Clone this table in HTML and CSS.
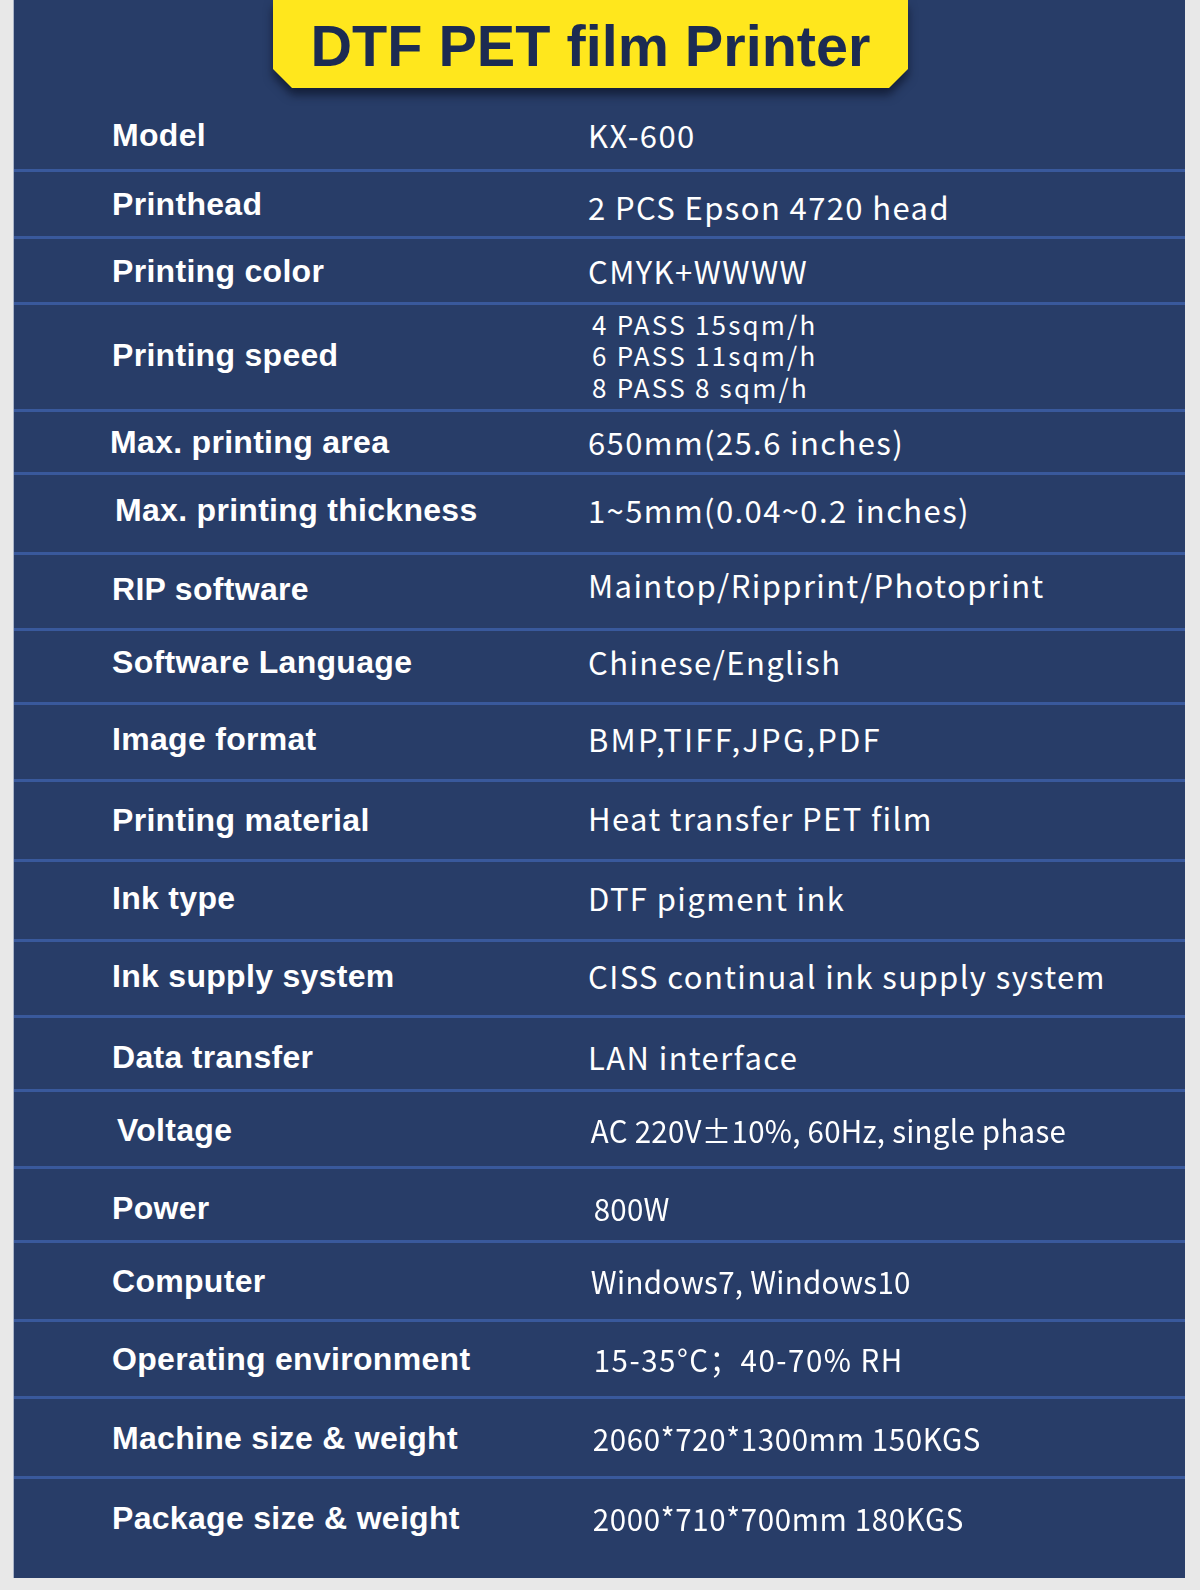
FILE: index.html
```html
<!DOCTYPE html>
<html lang="en">
<head>
<meta charset="utf-8">
<title>DTF PET film Printer</title>
<link rel="stylesheet" href="styles.css">
</head>
<body>
<main class="sheet">
  <header class="banner-wrap">
    <div class="banner"><h1 class="title">DTF PET film Printer</h1></div>
  </header>
  <section class="specs">
    <div class="row"><div class="label">Model</div><div class="value">KX-600</div></div>
    <div class="row"><div class="label">Printhead</div><div class="value value-down">2 PCS Epson 4720 head</div></div>
    <div class="row"><div class="label">Printing color</div><div class="value">CMYK+WWWW</div></div>
    <div class="row"><div class="label">Printing speed</div><div class="value value-list"><span>4 PASS 15sqm/h</span><span>6 PASS 11sqm/h</span><span>8 PASS 8 sqm/h</span></div></div>
    <div class="row"><div class="label label-left">Max. printing area</div><div class="value">650mm(25.6 inches)</div></div>
    <div class="row"><div class="label label-right">Max. printing thickness</div><div class="value">1~5mm(0.04~0.2 inches)</div></div>
    <div class="row"><div class="label">RIP software</div><div class="value value-up">Maintop/Ripprint/Photoprint</div></div>
    <div class="row"><div class="label">Software Language</div><div class="value">Chinese/English</div></div>
    <div class="row"><div class="label">Image format</div><div class="value value-wide">BMP,TIFF,JPG,PDF</div></div>
    <div class="row"><div class="label">Printing material</div><div class="value value-up-s">Heat transfer PET film</div></div>
    <div class="row"><div class="label">Ink type</div><div class="value">DTF pigment ink</div></div>
    <div class="row"><div class="label">Ink supply system</div><div class="value">CISS continual ink supply system</div></div>
    <div class="row"><div class="label">Data transfer</div><div class="value">LAN interface</div></div>
    <div class="row"><div class="label label-right2">Voltage</div><div class="value"><span class="cond">AC 220V±10%, 60Hz, single phase</span></div></div>
    <div class="row"><div class="label">Power</div><div class="value"><span class="cond cond-in">800W</span></div></div>
    <div class="row"><div class="label">Computer</div><div class="value"><span class="cond">Windows7, Windows10</span></div></div>
    <div class="row"><div class="label">Operating environment</div><div class="value"><span class="cond cond-in cond-wide">15-35°C；40-70% RH</span></div></div>
    <div class="row"><div class="label">Machine size &amp; weight</div><div class="value"><span class="cond cond-mid">2060*720*1300mm 150KGS</span></div></div>
    <div class="row"><div class="label">Package size &amp; weight</div><div class="value"><span class="cond cond-mid">2000*710*700mm 180KGS</span></div></div>
  </section>
</main>
</body>
</html>
```
FILE: styles.css
```css
* { box-sizing: border-box; }
html, body { margin: 0; padding: 0; }
body {
  background: #e8e8e8;
  width: 1200px;
  height: 1590px;
  overflow: hidden;
}
.sheet {
  margin-left: 13px;
  width: 1172px;
  height: 1578px;
  background: #283d68;
  border-left: 1px solid #aab4c8;
  display: flex;
  flex-direction: column;
}
.banner-wrap {
  height: 88px;
  padding-left: 259px;
  filter: drop-shadow(0 7px 5px rgba(8, 14, 32, 0.65));
}
.banner {
  width: 635px;
  height: 88px;
  background: #ffe71d;
  clip-path: polygon(0 0, 100% 0, 100% 69px, calc(100% - 19px) 100%, 19px 100%, 0 69px);
  display: flex;
  justify-content: center;
  align-items: flex-start;
}
.title {
  margin: 0;
  padding-top: 13px;
  font-family: "Liberation Sans", Arial, sans-serif;
  font-weight: 700;
  font-size: 57.6px;
  line-height: 66px;
  color: #1c2b52;
  letter-spacing: 0;
}
.specs {
  display: flex;
  flex-direction: column;
}
.row {
  display: grid;
  grid-template-columns: 476px 1fr;
  align-items: center;
  padding-left: 98px;
  border-bottom: 3px solid #39599c;
  color: #ffffff;
}
.row:last-child { border-bottom: 0; }
.label {
  font-family: "Liberation Sans", Arial, sans-serif;
  font-weight: 700;
  font-size: 32px;
  letter-spacing: 0.3px;
  line-height: 38px;
  white-space: nowrap;
}
.label-left { margin-left: -2px; }
.label-right { margin-left: 3px; }
.label-right2 { margin-left: 5px; }
.value {
  font-family: "Noto Sans CJK SC", "Noto Sans", sans-serif;
  font-size: 31px;
  letter-spacing: 1.4px;
  line-height: 40px;
  white-space: nowrap;
}
.value-down { margin-top: 5px; }
.value-up { margin-bottom: 8px; }
.value-up-s { margin-bottom: 4px; }
.value-wide { letter-spacing: 2.2px; }
.value-list {
  display: flex;
  flex-direction: column;
  font-size: 26px;
  letter-spacing: 2.2px;
  line-height: 31.5px;
  padding-left: 4px;
}
.cond {
  display: inline-block;
  padding-left: 3px;
  font-size: 31px;
  letter-spacing: 0.3px;
  transform: scaleX(0.95);
  transform-origin: left center;
}
.cond-in { padding-left: 6px; }
.cond-wide { letter-spacing: 1.6px; }
.cond-mid { letter-spacing: 0.7px; padding-left: 5px; }
.row:nth-child(1) { height: 84px; padding-top: 13px; }
.row:nth-child(2) { height: 67px; }
.row:nth-child(3) { height: 66px; }
.row:nth-child(4) { height: 107px; padding-bottom: 4px; }
.row:nth-child(5) { height: 63px; }
.row:nth-child(6) { height: 80px; padding-bottom: 8px; }
.row:nth-child(7) { height: 76px; padding-bottom: 6px; }
.row:nth-child(8) { height: 74px; padding-bottom: 10px; }
.row:nth-child(9) { height: 77px; padding-bottom: 6px; }
.row:nth-child(10) { height: 80px; padding-bottom: 2px; }
.row:nth-child(11) { height: 80px; padding-bottom: 6px; }
.row:nth-child(12) { height: 76px; padding-bottom: 6px; }
.row:nth-child(13) { height: 74px; padding-top: 6px; }
.row:nth-child(14) { height: 77px; padding-top: 2px; }
.row:nth-child(15) { height: 74px; padding-top: 6px; }
.row:nth-child(16) { height: 79px; }
.row:nth-child(17) { height: 77px; }
.row:nth-child(18) { height: 80px; }
.row:nth-child(19) { height: 99px; padding-bottom: 22px; }
```
